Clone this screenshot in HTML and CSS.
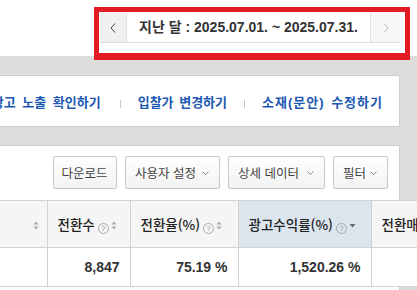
FILE: index.html
```html
<!DOCTYPE html>
<html lang="ko">
<head>
    <meta charset="UTF-8">
    <meta name="viewport" content="width=device-width, initial-scale=1.0">
    <title>보고서</title>
    <link rel="stylesheet" href="styles.css">
</head>
<body>
    <div id="page">
        <div class="top">
            <div class="date-nav">
                <button class="nav-btn">
                    <svg width="6" height="10" viewBox="0 0 6 10"><polyline points="5,0.5 1,5 5,9.5" fill="none" stroke="#444" stroke-width="1"/></svg>
                </button>
                <div class="date-label">지난 달 : 2025.07.01. ~ 2025.07.31.</div>
                <button class="nav-btn off">
                    <svg width="6" height="10" viewBox="0 0 6 10"><polyline points="1,0.5 5,5 1,9.5" fill="none" stroke="#bbb" stroke-width="1"/></svg>
                </button>
            </div>
            <div class="mark"></div>
        </div>

        <div class="content">
            <div class="card links">
                <a href="#" class="spread">광고 노출 확인하기</a>
                <span class="sep"></span>
                <a href="#">입찰가 변경하기</a>
                <span class="sep"></span>
                <a href="#" class="wide">소재(문안) 수정하기</a>
            </div>

            <div class="card report">
                <div class="tools">
                    <button class="btn w-down">다운로드</button>
                    <button class="btn drop w-user">사용자 설정 <svg width="7" height="4" viewBox="0 0 7 4"><polyline points="0.5,0.5 3.5,3.5 6.5,0.5" fill="none" stroke="#888" stroke-width="1"/></svg></button>
                    <button class="btn drop w-detail">상세 데이터 <svg width="7" height="4" viewBox="0 0 7 4"><polyline points="0.5,0.5 3.5,3.5 6.5,0.5" fill="none" stroke="#888" stroke-width="1"/></svg></button>
                    <button class="btn drop w-filter">필터 <svg width="7" height="4" viewBox="0 0 7 4"><polyline points="0.5,0.5 3.5,3.5 6.5,0.5" fill="none" stroke="#888" stroke-width="1"/></svg></button>
                </div>

                <table class="grid">
                    <colgroup>
                        <col class="c1">
                        <col class="c2">
                        <col class="c3">
                        <col class="c4">
                        <col class="c5">
                    </colgroup>
                    <thead>
                        <tr>
                            <th class="first">
                                <svg class="sort" width="6" height="9" viewBox="0 0 6 9"><polygon points="0.5,3.5 3,0.5 5.5,3.5" fill="#aaa"/><polygon points="0.5,5.5 3,8.5 5.5,5.5" fill="#aaa"/></svg>
                            </th>
                            <th>전환수<span class="help">?</span><svg class="sort" width="6" height="9" viewBox="0 0 6 9"><polygon points="0.5,3.5 3,0.5 5.5,3.5" fill="#aaa"/><polygon points="0.5,5.5 3,8.5 5.5,5.5" fill="#aaa"/></svg></th>
                            <th>전환율(%)<span class="help">?</span><svg class="sort" width="6" height="9" viewBox="0 0 6 9"><polygon points="0.5,3.5 3,0.5 5.5,3.5" fill="#aaa"/><polygon points="0.5,5.5 3,8.5 5.5,5.5" fill="#aaa"/></svg></th>
                            <th class="active">광고수익률(%)<span class="help">?</span><svg class="sort" width="7" height="9" viewBox="0 0 7 9"><polygon points="0.5,3 6.5,3 3.5,6.5" fill="#666"/></svg></th>
                            <th>전환매출액</th>
                        </tr>
                    </thead>
                    <tbody>
                        <tr>
                            <td></td>
                            <td>8,847</td>
                            <td>75.19 %</td>
                            <td>1,520.26 %</td>
                            <td></td>
                        </tr>
                    </tbody>
                </table>
            </div>
        </div>
    </div>
</body>
</html>
```

FILE: styles.css
```css
*{
    margin: 0;
    padding: 0;
    box-sizing: border-box;
}
body{
    width: 417px;
    height: 290px;
    overflow: hidden;
    background-color: #dcdcdc;
    font-family: "Liberation Sans", "Noto Sans CJK KR", sans-serif;
    color: #333;
}
#page{
    width: 417px;
    height: 290px;
    overflow: hidden;
}
.top{
    position: relative;
    height: 56px;
    background-color: white;
    display: flex;
    justify-content: flex-end;
    padding: 13px 17px 0 0;
}
.date-nav{
    display: flex;
    height: 30px;
    border-bottom: 1px solid #ddd;
}
.nav-btn{
    width: 27px;
    height: 29px;
    border: none;
    border-right: 1px solid #e2e2e2;
    background-color: #f0f0f0;
    display: flex;
    align-items: center;
    justify-content: center;
}
.nav-btn.off{
    width: 30px;
    border-right: none;
    border-left: 1px solid #e2e2e2;
    background-color: #f6f6f6;
}
.date-label{
    width: 243px;
    line-height: 29px;
    text-align: center;
    font-size: 14px;
    font-weight: bold;
    color: #333;
}
.mark{
    position: absolute;
    left: 94px;
    top: 7px;
    width: 316px;
    height: 53px;
    border: 5px solid #e21c23;
    border-bottom-width: 7px;
}
.content{
    padding-top: 20px;
}
.card{
    background-color: white;
    margin-right: 18px;
    box-shadow: 0 0 1px rgba(0, 0, 0, 0.35);
}
.links{
    height: 50px;
    display: flex;
    align-items: center;
    justify-content: flex-end;
    padding-right: 17px;
    white-space: nowrap;
    overflow: hidden;
}
.links a{
    flex-shrink: 0;
    font-size: 13px;
    font-weight: bold;
    color: #1d58b3;
    text-decoration: none;
    word-spacing: 2px;
}
.links a.spread{
    word-spacing: 3px;
    margin-right: 2px;
}
.links a.wide{
    letter-spacing: 1px;
    margin-right: -1px;
}
.sep{
    flex-shrink: 0;
    display: inline-block;
    width: 1px;
    height: 8px;
    margin: 5px 17px 0;
    background-color: #ccc;
}
.report{
    margin-top: 20px;
    padding-top: 10px;
    height: 200px;
}
.tools{
    display: flex;
    justify-content: flex-end;
    padding-right: 11px;
}
.btn{
    height: 33px;
    margin-left: 8px;
    padding: 0 10px 0 9px;
    display: flex;
    align-items: center;
    justify-content: center;
    font-family: "Noto Sans CJK KR", sans-serif;
    font-size: 12.5px;
    color: #444;
    background: linear-gradient(#ffffff, #f2f2f2);
    border: 1px solid #c8c8c8;
    border-radius: 2px;
    white-space: nowrap;
}
.btn.drop{
    justify-content: space-between;
}
.w-down{
    width: 64px;
}
.w-user{
    width: 95px;
}
.w-detail{
    width: 97px;
}
.w-filter{
    width: 55px;
}
.grid{
    margin-top: 11px;
    width: 491px;
    table-layout: fixed;
    border-collapse: collapse;
    background-color: white;
}
.c1{
    width: 47px;
}
.c2{
    width: 83px;
}
.c3{
    width: 108px;
}
.c4{
    width: 133px;
}
.c5{
    width: 120px;
}
.grid th{
    height: 47px;
    padding: 0 0 0 10px;
    text-align: left;
    font-family: "Noto Sans CJK KR", sans-serif;
    font-size: 13.5px;
    font-weight: 500;
    color: #222;
    white-space: nowrap;
    overflow: hidden;
    background-color: #f5f5f5;
    border: 1px solid #d2d2d2;
    border-left: none;
}
.grid th.first{
    text-align: right;
    padding-right: 8px;
}
.grid th.active{
    background-color: #dbe5ee;
}
.grid td{
    height: 39px;
    padding: 0 10px 0 0;
    text-align: right;
    font-size: 14px;
    font-weight: bold;
    color: #333;
    border: 1px solid #d2d2d2;
    border-left: none;
    border-top: none;
}
.help{
    display: inline-block;
    width: 11px;
    height: 11px;
    margin-left: 3px;
    border: 1px solid #aaa;
    border-radius: 50%;
    font-family: "Liberation Sans", sans-serif;
    font-size: 8px;
    font-weight: normal;
    line-height: 9px;
    text-align: center;
    color: #999;
    vertical-align: -1px;
}
.sort{
    margin-left: 2px;
    vertical-align: 0;
}
```
